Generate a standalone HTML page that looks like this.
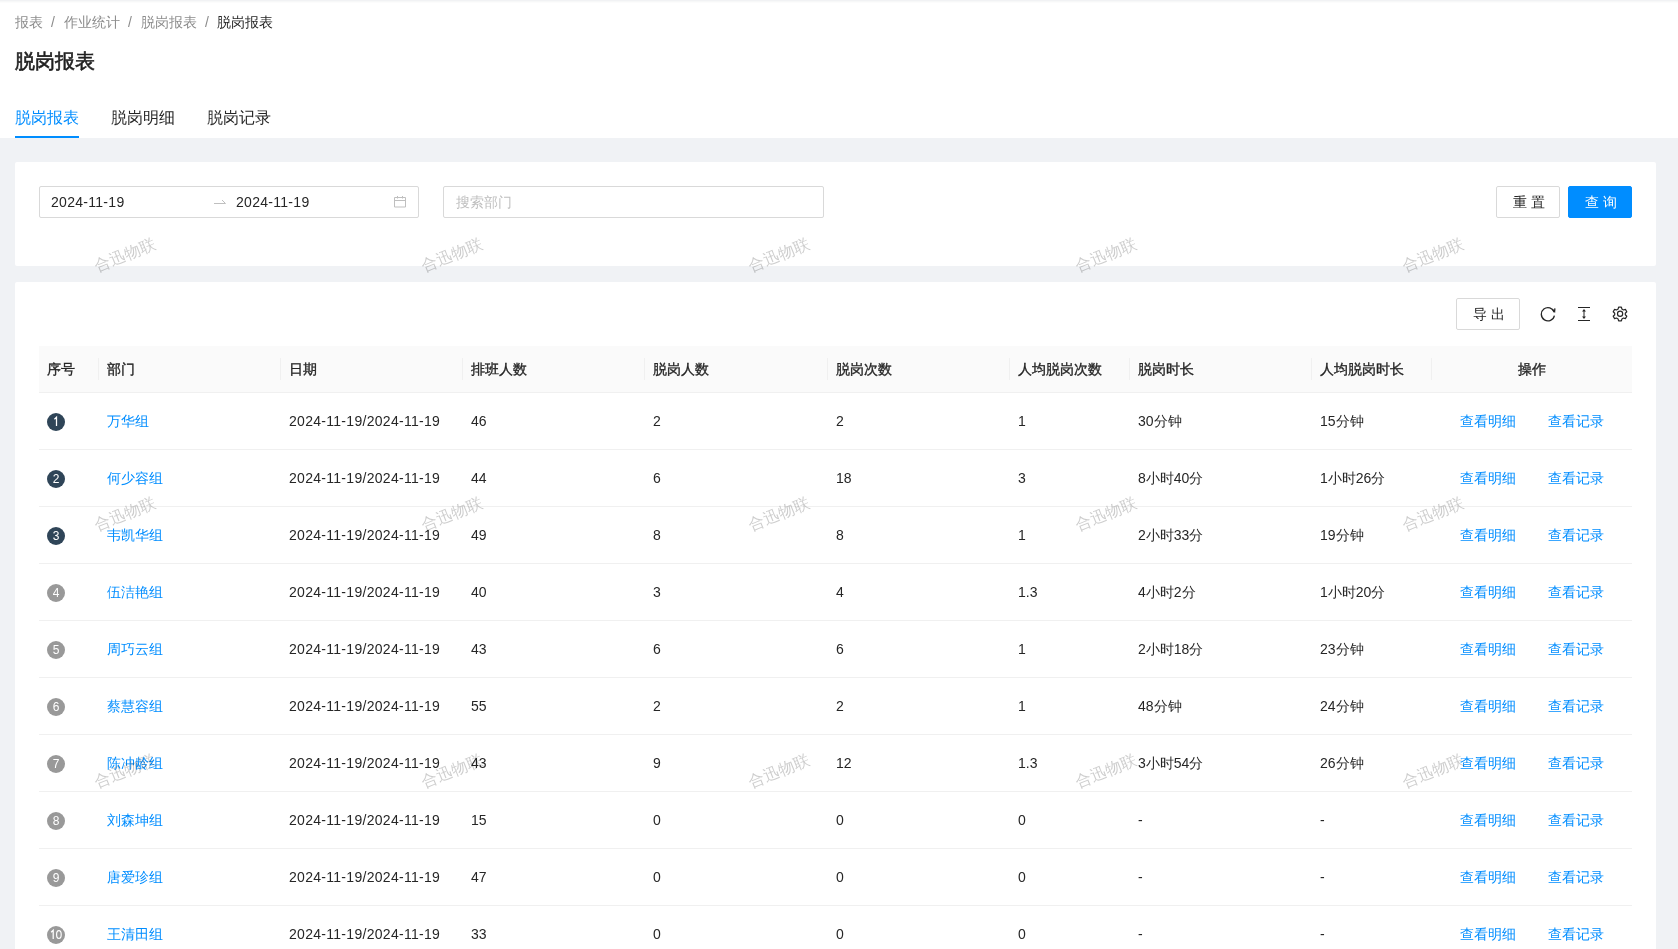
<!DOCTYPE html>
<html><head><meta charset="utf-8">
<style>
*{box-sizing:border-box;margin:0;padding:0}
html,body{width:1678px;height:949px;overflow:hidden;background:#fff}
body{font-family:"Liberation Sans",sans-serif;font-size:14px;color:#262626;position:relative}
.wrap{position:absolute;left:0;top:0;width:1678px;height:949px;will-change:transform}
.abs{position:absolute}
.topstrip{left:0;top:0;width:1678px;height:3px;background:linear-gradient(#f1f2f4 0,#f1f2f4 1px,#f7f8f8 1px,#f7f8f8 2px,#fcfcfc 2px,#fcfcfc 3px)}
.bc{left:15px;top:12px;height:20px;line-height:20px;color:#8c8c8c;white-space:nowrap}
.bc span{position:absolute;top:0}
.title{left:15px;top:48px;line-height:26px;font-size:20px;font-weight:400;-webkit-text-stroke:0.6px #1f1f1f;color:#1f1f1f;white-space:nowrap}
.tab{top:106px;line-height:24px;font-size:16px;color:#262626;white-space:nowrap}
.tab.act{color:#008dff}
.ink{left:15px;top:136px;width:64px;height:2px;background:#008dff}
.bg{left:0;top:138px;width:1678px;height:811px;background:#f0f2f5}
.card{background:#fff;border-radius:2px}
.input{border:1px solid #d9d9d9;border-radius:2px;background:#fff}
.btn{border:1px solid #d9d9d9;border-radius:2px;background:#fff;text-align:center;line-height:30px;color:#262626}
.btn.pri{background:#008dff;border-color:#008dff;color:#fff}
.th{top:346px;left:39px;width:1593px;height:47px;background:#fafafa;border-bottom:1px solid #f0f0f0}
.sep{position:absolute;top:12px;width:1px;height:22px;background:#f0f0f0}
.cell{position:absolute;white-space:nowrap;line-height:22px}
.dt{letter-spacing:0.29px}
.hd{-webkit-text-stroke:0.35px #262626}
.rowb{position:absolute;left:39px;width:1593px;height:1px;background:#f0f0f0}
.num{position:absolute;left:47px;width:18px;height:18px;border-radius:50%;color:#fff;font-size:12px;line-height:18px;text-align:center}
.link{color:#008dff}
.wm{position:absolute;font-size:16px;color:rgba(0,0,0,.2);transform:rotate(-22deg);white-space:nowrap;line-height:20px;pointer-events:none}
</style></head><body><div class="wrap">
<div class="abs topstrip"></div>
<div class="abs bc">
  <span style="left:0">报表</span>
  <span style="left:36px">/</span>
  <span style="left:49px">作业统计</span>
  <span style="left:113px">/</span>
  <span style="left:126px">脱岗报表</span>
  <span style="left:190px">/</span>
  <span style="left:202px;color:#262626">脱岗报表</span>
</div>
<div class="abs title">脱岗报表</div>
<div class="abs tab act" style="left:15px">脱岗报表</div>
<div class="abs tab" style="left:111px">脱岗明细</div>
<div class="abs tab" style="left:207px">脱岗记录</div>
<div class="abs ink"></div>
<div class="abs bg"></div>
<div class="abs card" style="left:15px;top:162px;width:1641px;height:104px"></div>
<div class="abs card" style="left:15px;top:282px;width:1641px;height:700px"></div>

<!-- FORM -->
<div class="abs input" style="left:39px;top:186px;width:380px;height:32px">
  <div class="cell dt" style="left:11px;top:4px">2024-11-19</div>
  <svg class="abs" style="left:173px;top:9px" width="14" height="12" viewBox="0 0 14 12"><path d="M1 7.5H12.5L9 4" fill="none" stroke="#bfbfbf" stroke-width="1"/></svg>
  <div class="cell dt" style="left:196px;top:4px">2024-11-19</div>
  <svg class="abs" style="left:353px;top:8px" width="14" height="14" viewBox="0 0 14 14"><path d="M1.5 2.5H12.5V12H1.5Z M1.5 5.5H12.5 M4.5 1V3.5 M9.5 1V3.5" fill="none" stroke="#bfbfbf" stroke-width="1"/></svg>
</div>
<div class="abs input" style="left:443px;top:186px;width:381px;height:32px">
  <div class="cell" style="left:12px;top:4px;color:#bfbfbf">搜索部门</div>
</div>
<div class="abs btn" style="left:1496px;top:186px;width:64px;height:32px;letter-spacing:4px;padding-left:5px">重置</div>
<div class="abs btn pri" style="left:1568px;top:186px;width:64px;height:32px;letter-spacing:4px;padding-left:5px">查询</div>
<!-- TOOLBAR -->
<div class="abs btn" style="left:1456px;top:298px;width:64px;height:32px;letter-spacing:4px;padding-left:5px">导出</div>
<svg class="abs" style="left:1540px;top:306px" width="16" height="16" viewBox="0 0 16 16"><path d="M14.2 6.2A6.6 6.6 0 1 0 14.4 9.6" fill="none" stroke="#262626" stroke-width="1.3"/><path d="M12.3 3.2L14.6 5.6L14.9 2.4" fill="none" stroke="#262626" stroke-width="1.3"/></svg>
<svg class="abs" style="left:1576px;top:306px" width="16" height="16" viewBox="0 0 16 16"><path d="M2 1.5H14M2 14.5H14" fill="none" stroke="#262626" stroke-width="1.2"/><path d="M8 4.2V11.8" fill="none" stroke="#262626" stroke-width="1"/><path d="M6.7 5.6L8 3.9L9.3 5.6M6.7 10.4L8 12.1L9.3 10.4" fill="none" stroke="#262626" stroke-width="1.1"/></svg>
<svg class="abs" style="left:1612px;top:306px" width="16" height="16" viewBox="0 0 16 16"><path d="M6.6 1.2H9.4L9.9 3.1L11.5 4L13.4 3.4L14.8 5.8L13.3 7.2V8.8L14.8 10.2L13.4 12.6L11.5 12L9.9 12.9L9.4 14.8H6.6L6.1 12.9L4.5 12L2.6 12.6L1.2 10.2L2.7 8.8V7.2L1.2 5.8L2.6 3.4L4.5 4L6.1 3.1Z" fill="none" stroke="#262626" stroke-width="1.2" stroke-linejoin="round"/><circle cx="8.1" cy="7.8" r="2.6" fill="none" stroke="#262626" stroke-width="1.2"/></svg>
<!-- ROWS -->
<div class="abs th">
<div class="cell hd" style="left:8px;top:12px">序号</div>
<div class="cell hd" style="left:68px;top:12px">部门</div>
<div class="cell hd" style="left:250px;top:12px">日期</div>
<div class="cell hd" style="left:432px;top:12px">排班人数</div>
<div class="cell hd" style="left:614px;top:12px">脱岗人数</div>
<div class="cell hd" style="left:797px;top:12px">脱岗次数</div>
<div class="cell hd" style="left:979px;top:12px">人均脱岗次数</div>
<div class="cell hd" style="left:1099px;top:12px">脱岗时长</div>
<div class="cell hd" style="left:1281px;top:12px">人均脱岗时长</div>
<div class="cell hd" style="left:1393px;width:200px;text-align:center;top:12px">操作</div>
<div class="sep" style="left:59px"></div>
<div class="sep" style="left:241px"></div>
<div class="sep" style="left:423px"></div>
<div class="sep" style="left:605px"></div>
<div class="sep" style="left:788px"></div>
<div class="sep" style="left:970px"></div>
<div class="sep" style="left:1090px"></div>
<div class="sep" style="left:1272px"></div>
<div class="sep" style="left:1392px"></div>
</div>
<div class="num" style="top:413px;background:#2f4558"><svg width="18" height="18" style="position:absolute;left:0;top:0"><path d="M7.4 6.3L9.5 4.3V13" fill="none" stroke="#fff" stroke-width="1.25"/></svg></div>
<div class="cell link" style="left:107px;top:410px">万华组</div>
<div class="cell dt" style="left:289px;top:410px">2024-11-19/2024-11-19</div>
<div class="cell" style="left:471px;top:410px">46</div>
<div class="cell" style="left:653px;top:410px">2</div>
<div class="cell" style="left:836px;top:410px">2</div>
<div class="cell" style="left:1018px;top:410px">1</div>
<div class="cell" style="left:1138px;top:410px">30分钟</div>
<div class="cell" style="left:1320px;top:410px">15分钟</div>
<div class="cell link" style="left:1460px;top:410px">查看明细</div>
<div class="cell link" style="left:1548px;top:410px">查看记录</div>
<div class="rowb" style="top:449px"></div>
<div class="num" style="top:470px;background:#2f4558">2</div>
<div class="cell link" style="left:107px;top:467px">何少容组</div>
<div class="cell dt" style="left:289px;top:467px">2024-11-19/2024-11-19</div>
<div class="cell" style="left:471px;top:467px">44</div>
<div class="cell" style="left:653px;top:467px">6</div>
<div class="cell" style="left:836px;top:467px">18</div>
<div class="cell" style="left:1018px;top:467px">3</div>
<div class="cell" style="left:1138px;top:467px">8小时40分</div>
<div class="cell" style="left:1320px;top:467px">1小时26分</div>
<div class="cell link" style="left:1460px;top:467px">查看明细</div>
<div class="cell link" style="left:1548px;top:467px">查看记录</div>
<div class="rowb" style="top:506px"></div>
<div class="num" style="top:527px;background:#2f4558">3</div>
<div class="cell link" style="left:107px;top:524px">韦凯华组</div>
<div class="cell dt" style="left:289px;top:524px">2024-11-19/2024-11-19</div>
<div class="cell" style="left:471px;top:524px">49</div>
<div class="cell" style="left:653px;top:524px">8</div>
<div class="cell" style="left:836px;top:524px">8</div>
<div class="cell" style="left:1018px;top:524px">1</div>
<div class="cell" style="left:1138px;top:524px">2小时33分</div>
<div class="cell" style="left:1320px;top:524px">19分钟</div>
<div class="cell link" style="left:1460px;top:524px">查看明细</div>
<div class="cell link" style="left:1548px;top:524px">查看记录</div>
<div class="rowb" style="top:563px"></div>
<div class="num" style="top:584px;background:#999">4</div>
<div class="cell link" style="left:107px;top:581px">伍洁艳组</div>
<div class="cell dt" style="left:289px;top:581px">2024-11-19/2024-11-19</div>
<div class="cell" style="left:471px;top:581px">40</div>
<div class="cell" style="left:653px;top:581px">3</div>
<div class="cell" style="left:836px;top:581px">4</div>
<div class="cell" style="left:1018px;top:581px">1.3</div>
<div class="cell" style="left:1138px;top:581px">4小时2分</div>
<div class="cell" style="left:1320px;top:581px">1小时20分</div>
<div class="cell link" style="left:1460px;top:581px">查看明细</div>
<div class="cell link" style="left:1548px;top:581px">查看记录</div>
<div class="rowb" style="top:620px"></div>
<div class="num" style="top:641px;background:#999">5</div>
<div class="cell link" style="left:107px;top:638px">周巧云组</div>
<div class="cell dt" style="left:289px;top:638px">2024-11-19/2024-11-19</div>
<div class="cell" style="left:471px;top:638px">43</div>
<div class="cell" style="left:653px;top:638px">6</div>
<div class="cell" style="left:836px;top:638px">6</div>
<div class="cell" style="left:1018px;top:638px">1</div>
<div class="cell" style="left:1138px;top:638px">2小时18分</div>
<div class="cell" style="left:1320px;top:638px">23分钟</div>
<div class="cell link" style="left:1460px;top:638px">查看明细</div>
<div class="cell link" style="left:1548px;top:638px">查看记录</div>
<div class="rowb" style="top:677px"></div>
<div class="num" style="top:698px;background:#999">6</div>
<div class="cell link" style="left:107px;top:695px">蔡慧容组</div>
<div class="cell dt" style="left:289px;top:695px">2024-11-19/2024-11-19</div>
<div class="cell" style="left:471px;top:695px">55</div>
<div class="cell" style="left:653px;top:695px">2</div>
<div class="cell" style="left:836px;top:695px">2</div>
<div class="cell" style="left:1018px;top:695px">1</div>
<div class="cell" style="left:1138px;top:695px">48分钟</div>
<div class="cell" style="left:1320px;top:695px">24分钟</div>
<div class="cell link" style="left:1460px;top:695px">查看明细</div>
<div class="cell link" style="left:1548px;top:695px">查看记录</div>
<div class="rowb" style="top:734px"></div>
<div class="num" style="top:755px;background:#999">7</div>
<div class="cell link" style="left:107px;top:752px">陈冲龄组</div>
<div class="cell dt" style="left:289px;top:752px">2024-11-19/2024-11-19</div>
<div class="cell" style="left:471px;top:752px">43</div>
<div class="cell" style="left:653px;top:752px">9</div>
<div class="cell" style="left:836px;top:752px">12</div>
<div class="cell" style="left:1018px;top:752px">1.3</div>
<div class="cell" style="left:1138px;top:752px">3小时54分</div>
<div class="cell" style="left:1320px;top:752px">26分钟</div>
<div class="cell link" style="left:1460px;top:752px">查看明细</div>
<div class="cell link" style="left:1548px;top:752px">查看记录</div>
<div class="rowb" style="top:791px"></div>
<div class="num" style="top:812px;background:#999">8</div>
<div class="cell link" style="left:107px;top:809px">刘森坤组</div>
<div class="cell dt" style="left:289px;top:809px">2024-11-19/2024-11-19</div>
<div class="cell" style="left:471px;top:809px">15</div>
<div class="cell" style="left:653px;top:809px">0</div>
<div class="cell" style="left:836px;top:809px">0</div>
<div class="cell" style="left:1018px;top:809px">0</div>
<div class="cell" style="left:1138px;top:809px">-</div>
<div class="cell" style="left:1320px;top:809px">-</div>
<div class="cell link" style="left:1460px;top:809px">查看明细</div>
<div class="cell link" style="left:1548px;top:809px">查看记录</div>
<div class="rowb" style="top:848px"></div>
<div class="num" style="top:869px;background:#999">9</div>
<div class="cell link" style="left:107px;top:866px">唐爱珍组</div>
<div class="cell dt" style="left:289px;top:866px">2024-11-19/2024-11-19</div>
<div class="cell" style="left:471px;top:866px">47</div>
<div class="cell" style="left:653px;top:866px">0</div>
<div class="cell" style="left:836px;top:866px">0</div>
<div class="cell" style="left:1018px;top:866px">0</div>
<div class="cell" style="left:1138px;top:866px">-</div>
<div class="cell" style="left:1320px;top:866px">-</div>
<div class="cell link" style="left:1460px;top:866px">查看明细</div>
<div class="cell link" style="left:1548px;top:866px">查看记录</div>
<div class="rowb" style="top:905px"></div>
<div class="num" style="top:926px;background:#999"><svg width="18" height="18" style="position:absolute;left:0;top:0"><path d="M4.1 6.2L6.2 4.2V12.9" fill="none" stroke="#fff" stroke-width="1.25"/><ellipse cx="11.9" cy="8.6" rx="2.3" ry="3.9" fill="none" stroke="#fff" stroke-width="1.2"/></svg></div>
<div class="cell link" style="left:107px;top:923px">王清田组</div>
<div class="cell dt" style="left:289px;top:923px">2024-11-19/2024-11-19</div>
<div class="cell" style="left:471px;top:923px">33</div>
<div class="cell" style="left:653px;top:923px">0</div>
<div class="cell" style="left:836px;top:923px">0</div>
<div class="cell" style="left:1018px;top:923px">0</div>
<div class="cell" style="left:1138px;top:923px">-</div>
<div class="cell" style="left:1320px;top:923px">-</div>
<div class="cell link" style="left:1460px;top:923px">查看明细</div>
<div class="cell link" style="left:1548px;top:923px">查看记录</div>
<div class="rowb" style="top:962px"></div>
<!-- /ROWS -->
<!-- WM -->
<div class="wm" style="left:92.5px;top:244.8px">合迅物联</div>
<div class="wm" style="left:419.5px;top:244.8px">合迅物联</div>
<div class="wm" style="left:746.5px;top:244.8px">合迅物联</div>
<div class="wm" style="left:1073.5px;top:244.8px">合迅物联</div>
<div class="wm" style="left:1400.5px;top:244.8px">合迅物联</div>
<div class="wm" style="left:92.5px;top:503.6px">合迅物联</div>
<div class="wm" style="left:419.5px;top:503.6px">合迅物联</div>
<div class="wm" style="left:746.5px;top:503.6px">合迅物联</div>
<div class="wm" style="left:1073.5px;top:503.6px">合迅物联</div>
<div class="wm" style="left:1400.5px;top:503.6px">合迅物联</div>
<div class="wm" style="left:92.5px;top:761.3px">合迅物联</div>
<div class="wm" style="left:419.5px;top:761.3px">合迅物联</div>
<div class="wm" style="left:746.5px;top:761.3px">合迅物联</div>
<div class="wm" style="left:1073.5px;top:761.3px">合迅物联</div>
<div class="wm" style="left:1400.5px;top:761.3px">合迅物联</div>
</div></body></html>
